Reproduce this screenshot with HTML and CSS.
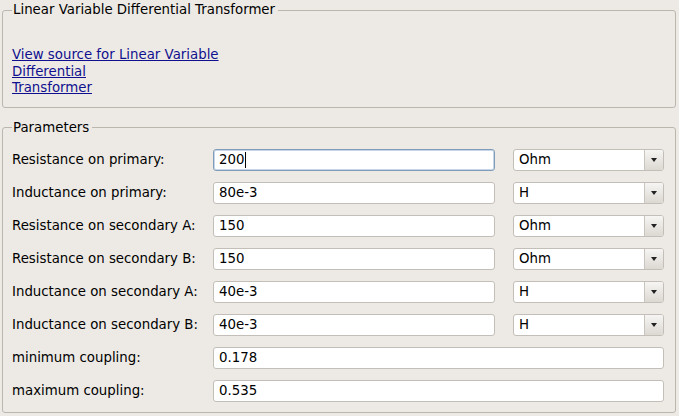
FILE: index.html
```html
<!DOCTYPE html>
<html>
<head>
<meta charset="utf-8">
<link rel="stylesheet" href="styles.css">
</head>
<body>
<fieldset class="box box-info">
  <legend class="legend">Linear Variable Differential Transformer</legend>
  <div class="links">
    <a class="link" href="#">View source for Linear Variable<br>Differential<br>Transformer</a>
  </div>
</fieldset>
<fieldset class="box box-params">
  <legend class="legend">Parameters</legend>
  <div class="grid">
    <label class="lbl">Resistance on primary:</label>
    <div class="input focus"><span>200</span><span class="caret"></span></div>
    <div class="select"><span class="sel-text">Ohm</span><span class="sel-btn"><span class="arrow"></span></span></div>

    <label class="lbl">Inductance on primary:</label>
    <div class="input"><span>80e-3</span></div>
    <div class="select"><span class="sel-text">H</span><span class="sel-btn"><span class="arrow"></span></span></div>

    <label class="lbl">Resistance on secondary A:</label>
    <div class="input"><span>150</span></div>
    <div class="select"><span class="sel-text">Ohm</span><span class="sel-btn"><span class="arrow"></span></span></div>

    <label class="lbl">Resistance on secondary B:</label>
    <div class="input"><span>150</span></div>
    <div class="select"><span class="sel-text">Ohm</span><span class="sel-btn"><span class="arrow"></span></span></div>

    <label class="lbl">Inductance on secondary A:</label>
    <div class="input"><span>40e-3</span></div>
    <div class="select"><span class="sel-text">H</span><span class="sel-btn"><span class="arrow"></span></span></div>

    <label class="lbl">Inductance on secondary B:</label>
    <div class="input"><span>40e-3</span></div>
    <div class="select"><span class="sel-text">H</span><span class="sel-btn"><span class="arrow"></span></span></div>

    <label class="lbl">minimum coupling:</label>
    <div class="input wide"><span>0.178</span></div>

    <label class="lbl">maximum coupling:</label>
    <div class="input wide"><span>0.535</span></div>
  </div>
</fieldset>
</body>
</html>
```

FILE: styles.css
```css
html, body {
  margin: 0;
  padding: 0;
  background: #edeae5;
}
body {
  padding-top: 2px;
  font-family: "DejaVu Sans", sans-serif;
  font-size: 13.33px;
  color: #000;
}
.box {
  margin: 0 3px 0 2px;
  border: 1px solid #bbb7af;
  border-radius: 3px;
  padding: 0 10px 0 9px;
}
.legend {
  padding: 0 3px 0 1px;
  line-height: 16px;
  margin-left: 0;
}
.box-info {
  padding-bottom: 10px;
}
.links {
  padding-top: 29px;
  line-height: 16.5px;
}
.link {
  color: #10108f;
  text-decoration: underline;
}
.box-params {
  margin-top: 12px;
  padding-top: 13px;
  padding-bottom: 10px;
}
.grid {
  display: grid;
  grid-template-columns: 183px 282px 151px;
  column-gap: 18px;
  row-gap: 11px;
  align-items: center;
}
.lbl {
  line-height: 22px;
  white-space: nowrap;
}
.input {
  box-sizing: border-box;
  height: 22px;
  background: #fff;
  border: 1px solid #c3bfb8;
  border-radius: 3px;
  padding-left: 5px;
  display: flex;
  align-items: center;
}
.input.focus {
  border: 1px solid #7f9db9;
  box-shadow: inset 0 0 0 1px #c6d6e8;
}
.input.wide {
  grid-column: 2 / 4;
}
.caret {
  display: inline-block;
  width: 1px;
  height: 16px;
  background: #000;
  margin-left: 1px;
}
.select {
  box-sizing: border-box;
  height: 22px;
  background: #fff;
  border: 1px solid #c3bfb8;
  border-radius: 3px;
  display: flex;
  align-items: stretch;
  overflow: hidden;
}
.sel-text {
  flex: 1;
  padding-left: 5px;
  display: flex;
  align-items: center;
}
.sel-btn {
  width: 18px;
  border-left: 1px solid #c9c5be;
  background: linear-gradient(#f6f5f3, #dcd8d2);
  display: flex;
  align-items: center;
  justify-content: center;
}
.arrow {
  width: 0;
  height: 0;
  border-left: 3.5px solid transparent;
  border-right: 3.5px solid transparent;
  border-top: 4px solid #222;
  margin-top: 1px;
}
```
